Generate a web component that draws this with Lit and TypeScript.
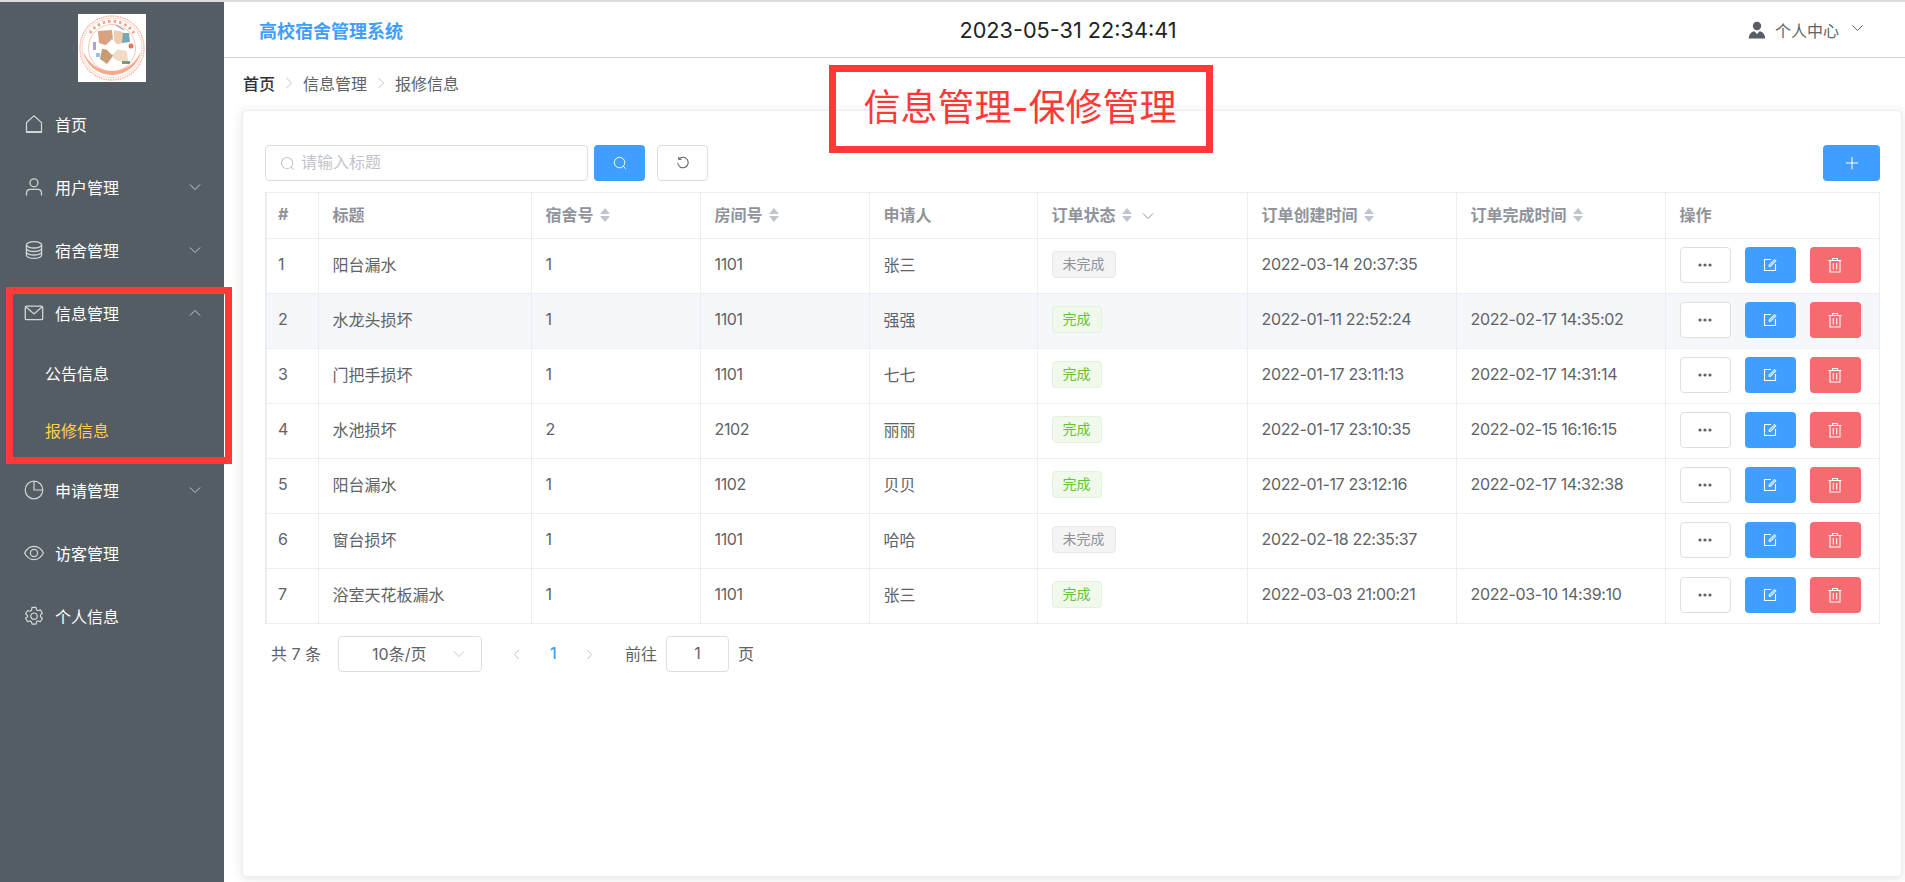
import { LitElement, html, css, svg } from "lit";
import { customElement } from "lit/decorators.js";

const chevDown = html`<svg class="chev" viewBox="0 0 12 8"><path d="M1 1.500l5 5 5-5" fill="none" stroke="currentColor" stroke-width="1"/></svg>`;
const chevUp = html`<svg class="chev" viewBox="0 0 12 8"><path d="M1 6.500l5-5 5 5" fill="none" stroke="currentColor" stroke-width="1"/></svg>`;

const icons = {
  home: svg`<path d="M2.500 8.500L10 1.800l7.500 6.700V18.500h-15z" fill="none" stroke="currentColor" stroke-width="1.200"/><path d="M2.500 17.800h15" stroke="currentColor" stroke-width="1.500"/>`,
  user: svg`<circle cx="10" cy="5.800" r="4" fill="none" stroke="currentColor" stroke-width="1.300"/><path d="M2.500 18.500v-2.500c0-2.200 1.700-3.700 3.900-3.700h7.200c2.200 0 3.900 1.500 3.900 3.700v2.500" fill="none" stroke="currentColor" stroke-width="1.300"/>`,
  db: svg`<ellipse cx="10" cy="4.800" rx="7.600" ry="3.200" fill="none" stroke="currentColor" stroke-width="1.300"/><path d="M2.400 4.800v10.400c0 1.800 3.400 3.200 7.600 3.200s7.600-1.400 7.600-3.200V4.800M2.400 8.300c0 1.800 3.400 3.200 7.600 3.200s7.600-1.400 7.600-3.200M2.400 11.800c0 1.800 3.400 3.200 7.600 3.200s7.600-1.400 7.600-3.200" fill="none" stroke="currentColor" stroke-width="1.300"/>`,
  mail: svg`<rect x="1.300" y="3.200" width="17.400" height="13.400" rx="1.200" fill="none" stroke="currentColor" stroke-width="1.300"/><path d="M1.800 3.800l8.200 7.200 8.200-7.200" fill="none" stroke="currentColor" stroke-width="1.300"/>`,
  pie: svg`<circle cx="10" cy="10" r="8.800" fill="none" stroke="currentColor" stroke-width="1.200"/><path d="M10 1.200V10h8.800" fill="none" stroke="currentColor" stroke-width="1.200"/>`,
  eye: svg`<path d="M.6 10C2.800 5.600 6.100 3.400 10 3.400s7.200 2.200 9.400 6.600c-2.200 4.400-5.500 6.600-9.400 6.600S2.800 14.400.6 10z" fill="none" stroke="currentColor" stroke-width="1.200"/><circle cx="10" cy="10" r="3.600" fill="none" stroke="currentColor" stroke-width="1.200"/>`,
  gear: svg`<path d="M8 1.400h4l.5 2.400 1.500.9 2.400-.8 2 3.400-1.900 1.600v1.800l1.900 1.600-2 3.400-2.400-.8-1.500.9-.5 2.400H8l-.5-2.400-1.500-.9-2.400.8-2-3.400 1.900-1.600V9.500L1.600 7.900l2-3.400 2.400.8 1.500-.9z" fill="none" stroke="currentColor" stroke-width="1.200" stroke-linejoin="round"/><circle cx="10" cy="10.200" r="3.200" fill="none" stroke="currentColor" stroke-width="1.200"/>`,
};

const menu = [
  { icon: "home", label: "首页" },
  { icon: "user", label: "用户管理", arrow: "down" },
  { icon: "db", label: "宿舍管理", arrow: "down" },
  { icon: "mail", label: "信息管理", arrow: "up", subs: [{ label: "公告信息" }, { label: "报修信息", active: true }] },
  { icon: "pie", label: "申请管理", arrow: "down" },
  { icon: "eye", label: "访客管理" },
  { icon: "gear", label: "个人信息" },
];

const rows = [
  ["1", "阳台漏水", "1", "1101", "张三", false, "2022-03-14 20:37:35", ""],
  ["2", "水龙头损坏", "1", "1101", "强强", true, "2022-01-11 22:52:24", "2022-02-17 14:35:02"],
  ["3", "门把手损坏", "1", "1101", "七七", true, "2022-01-17 23:11:13", "2022-02-17 14:31:14"],
  ["4", "水池损坏", "2", "2102", "丽丽", true, "2022-01-17 23:10:35", "2022-02-15 16:16:15"],
  ["5", "阳台漏水", "1", "1102", "贝贝", true, "2022-01-17 23:12:16", "2022-02-17 14:32:38"],
  ["6", "窗台损坏", "1", "1101", "哈哈", false, "2022-02-18 22:35:37", ""],
  ["7", "浴室天花板漏水", "1", "1101", "张三", true, "2022-03-03 21:00:21", "2022-03-10 14:39:10"],
];

const sort = html`<span class="sort"><i class="up"></i><i class="dn"></i></span>`;
const search = html`<svg class="ic" viewBox="0 0 16 16"><circle cx="7.500" cy="7.500" r="6" fill="none" stroke="currentColor" stroke-width="1.100"/><path d="M11.800 11.800l2.700 2.700" stroke="currentColor" stroke-width="1.100"/></svg>`;

@customElement("app-root")
export class AppRoot extends LitElement {
  static styles = css`
    :host { display: block; height: 882px; overflow: hidden; background: #fff; position: relative;
      font-family: Inter, "Noto Sans CJK SC", sans-serif; font-size: 16px; color: #606266; }
    .page { display: flex; height: 880px; border-top: 2px solid #dcdcdc; }
    .side { width: 224px; flex: none; background: #545c64; color: #fff; }
    .logo { height: 90px; display: flex; justify-content: center; padding-top: 12px; box-sizing: border-box; }
    .logo svg { width: 68px; height: 68px; display: block; }
    .item { height: 63px; display: flex; align-items: center; padding-left: 24px; }
    .item svg.mi { width: 20px; height: 20px; color: #d3d6d9; margin-right: 11px; flex: none; margin-top: 1px; }
    .item .chev { width: 12px; height: 8px; margin-left: auto; margin-right: 23px; color: #c8ccd0; }
    .sub { height: 57px; display: flex; align-items: center; padding-left: 45px; }
    .sub.on { color: #ffd04b; }
    .sub:last-child { margin-bottom: 3px; }
    .main { flex: 1; min-width: 0; display: flex; flex-direction: column; }
    .head { height: 55px; flex: none; border-bottom: 1.500px solid #d4d4d4; display: grid; grid-template-columns: 1fr auto 1fr; align-items: center; padding: 0 41px 0 35px; }
    .title { font-size: 18px; font-weight: 700; color: #409eff; }
    .clock { font-size: 21.700px; color: #222; margin-left: 13px; }
    .me { justify-self: end; display: flex; align-items: center; gap: 9px; color: #606266; }
    .me .chev { width: 13px; height: 8px; margin-left: 3px; margin-top: -4px; }
    .me .pic { width: 18px; height: 18px; }
    .crumb { height: 52px; flex: none; display: flex; align-items: center; padding-left: 19px; color: #606266; gap: 8px; box-sizing: border-box; padding-bottom: 3px; }
    .crumb b { font-weight: 500; color: #303133; }
    .crumb svg { width: 10px; height: 12px; color: #c0c4cc; margin: 0 1px; }
    .card { flex: 1; margin: 0 3px 5px 18px; border: 1px solid #ebeef5; border-radius: 4px; box-shadow: 0 2px 12px rgba(0,0,0,.1); padding: 34px 21px 0 22px; background: #fff; }
    .tools { display: flex; align-items: center; height: 36px; margin-bottom: 11px; }
    .input { width: 323px; height: 36px; box-sizing: border-box; border: 1px solid #dcdfe6; border-radius: 4px; display: flex; align-items: center; padding-left: 14px; color: #c0c4cc; gap: 6px; }
    .input span { padding-bottom: 4px; }
    .input .ic { width: 15px; height: 15px; }
    .btn { display: inline-flex; align-items: center; justify-content: center; height: 36px; box-sizing: border-box; border-radius: 4px; }
    .primary { background: #409eff; color: #fff; }
    .danger { background: #f56b70; color: #fff; }
    .plain { background: #fff; border: 1px solid #dcdfe6; color: #606266; }
    .tools .s { width: 51px; margin-left: 6px; }
    .tools .r { width: 51px; margin-left: 12px; }
    .tools .a { width: 57px; margin-left: auto; }
    .btn .ic { width: 14px; height: 14px; }
    table { border-collapse: collapse; table-layout: fixed; width: 1613px; border-left: 2px solid #ebeef5; }
    th, td { border: 1px solid #ebeef5; padding: 0 0 4px 14px; text-align: left; font-size: 16px; box-sizing: border-box; white-space: nowrap; }
    th:first-child, td:first-child { padding-left: 11px; }
    th { height: 46px; color: #909399; font-weight: 700; }
    td { height: 55px; }
    td.num { letter-spacing: -.35px; }
    tr.hov td { background: #f5f7fa; }
    .sort { display: inline-flex; flex-direction: column; gap: 2px; margin-left: 6px; vertical-align: middle; margin-top: -2px; }
    .sort i { display: block; width: 0; height: 0; border-left: 5px solid transparent; border-right: 5px solid transparent; }
    .sort .up { border-bottom: 6px solid #c0c4cc; }
    .sort .dn { border-top: 6px solid #c0c4cc; }
    th .chev { width: 12px; height: 8px; color: #909399; margin-left: 10px; vertical-align: middle; }
    .tag { display: inline-flex; align-items: center; height: 27px; box-sizing: border-box; padding: 0 10px 2px; font-size: 14px; border-radius: 4px; border: 1px solid #e9e9eb; background: #f4f4f5; color: #909399; vertical-align: middle; }
    .tag.ok { background: #f0f9eb; border-color: #e1f3d8; color: #67c23a; }
    .ops { display: flex; gap: 14px; margin-bottom: -2px; }
    .ops .btn { width: 51px; }
    .ops .ic { width: 16px; height: 16px; }
    .pager { display: flex; align-items: center; height: 36px; margin-top: 12px; padding-left: 6px; color: #606266; }
    .pager > span { padding-bottom: 3px; }
    .sel { width: 144px; height: 36px; box-sizing: border-box; margin-left: 17px; border: 1px solid #dcdfe6; border-radius: 4px; display: flex; align-items: center; padding-left: 33px; }
    .sel span { padding-bottom: 3px; }
    .sel .chev { width: 14px; height: 8px; margin-left: auto; margin-right: 15px; color: #c0c4cc; }
    .nav { width: 11px; height: 13px; color: #c0c4cc; }
    .nav.prev { margin-left: 29px; }
    .pager > .cur { color: #409eff; margin: 0 28px; font-weight: 500; width: 6px; text-align: center; }
    .pager > .go { margin-left: 30px; }
    .jump { width: 63px; height: 36px; box-sizing: border-box; border: 1px solid #dcdfe6; border-radius: 4px; margin: 0 9px; display: flex; align-items: center; justify-content: center; padding-bottom: 3px; }
    .note { position: absolute; box-sizing: border-box; border: 7px solid #ff3838; }
    .n1 { left: 6px; top: 287px; width: 226px; height: 177px; }
    .n2 { left: 829px; top: 65px; width: 384px; height: 88px; display: flex; align-items: center; justify-content: center; color: #ff3838; font-size: 37px; padding: 0 2px 8px 0; }
  `;

  private renderMenu() {
    return menu.map((m: any) => html`
      <div class="item">
        <svg class="mi" viewBox="0 0 20 20">${(icons as any)[m.icon]}</svg>
        <span>${m.label}</span>
        ${m.arrow === "down" ? chevDown : m.arrow === "up" ? chevUp : ""}
      </div>
      ${(m.subs || []).map((s: any) => html`<div class="sub ${s.active ? "on" : ""}">${s.label}</div>`)}
    `);
  }

  private renderLogo() {
    return html`<svg viewBox="0 0 68 68">
      <rect width="68" height="68" fill="#fff"/>
      <circle cx="34" cy="34" r="32" fill="none" stroke="#f9ab93" stroke-width="1.400" stroke-dasharray="1.400 1"/>
      <circle cx="34" cy="34" r="30" fill="#fff" stroke="#fbc4b3" stroke-width=".7"/>
      <path d="M12 19A26.500 26.500 0 0 1 56 19" fill="none" stroke="#f2a48b" stroke-width="3" stroke-dasharray="2.500 3"/>
      <circle cx="34" cy="34" r="23.500" fill="#fff" stroke="#f9b7a2" stroke-width=".8"/>
      <path d="M5 37a29.500 29.500 0 0 0 58 0c-5 12-15 20-29 20S10 49 5 37z" fill="#f9a88e"/>
      <path d="M36 19h15l1 9-16 2z" fill="#77a8b5"/>
      <path d="M20 17l14-1 1 10-5 6-9-3z" fill="#d9a27e"/>
      <path d="M36 16l9 2-1 11-8 3z" fill="#efcdb0"/>
      <path d="M24 35l10 1 1 6-6 8-7-5z" fill="#c79c73"/>
      <path d="M38 35l11 2 1 11-10-1-6-4z" fill="#f2dcc5"/>
      <path d="M44 47h8v3h-8z" fill="#7b9a86"/>
      <path d="M34 25l8 8-8 8-8-8z" fill="#fff"/>
      <circle cx="53" cy="32" r="2.500" fill="#e8705f"/>
      <rect x="15" y="28" width="3" height="8" fill="#a9a6d6"/>
      <rect x="18" y="39" width="4" height="4" fill="#9fc0dc"/>
      <path d="M38 11l8 5" stroke="#9aa6d8" stroke-width="1.200"/>
    </svg>`;
  }

  render() {
    const widths = [52, 213, 169, 169, 168, 210, 209, 209, 214];
    return html`
      <div class="page">
        <aside class="side">
          <div class="logo">${this.renderLogo()}</div>
          ${this.renderMenu()}
        </aside>
        <main class="main">
          <header class="head">
            <div class="title">高校宿舍管理系统</div>
            <div class="clock">2023-05-31 22:34:41</div>
            <div class="me">
              <svg class="pic" viewBox="0 0 18 18"><circle cx="9" cy="5" r="4.200" fill="#595d66"/><path d="M.8 17.500c0-4.200 2.800-7 5.500-7.300L9 13l2.700-2.800c2.700.3 5.500 3.100 5.500 7.300z" fill="#595d66"/></svg>
              <span>个人中心</span>${chevDown}
            </div>
          </header>
          <nav class="crumb">
            <b>首页</b>
            <svg viewBox="0 0 10 12"><path d="M2.500 1l5 5-5 5" fill="none" stroke="currentColor"/></svg>
            <span>信息管理</span>
            <svg viewBox="0 0 10 12"><path d="M2.500 1l5 5-5 5" fill="none" stroke="currentColor"/></svg>
            <span>报修信息</span>
          </nav>
          <section class="card">
            <div class="tools">
              <div class="input">${search}<span>请输入标题</span></div>
              <span class="btn primary s">${search}</span>
              <span class="btn plain r"><svg class="ic" viewBox="0 0 16 16"><path d="M3.600 3.400A6 6 0 1 1 2 8" fill="none" stroke="currentColor" stroke-width="1.200"/><path d="M3 .9l.4 3 3-.2" fill="none" stroke="currentColor" stroke-width="1.200"/></svg></span>
              <span class="btn primary a"><svg class="ic" viewBox="0 0 16 16"><path d="M8 1v14M1 8h14" stroke="currentColor" stroke-width="1.200"/></svg></span>
            </div>
            <table>
              <colgroup>${widths.map((w) => html`<col style="width:${w}px">`)}</colgroup>
              <thead><tr>
                <th>#</th><th>标题</th><th>宿舍号${sort}</th><th>房间号${sort}</th><th>申请人</th>
                <th>订单状态${sort}${chevDown}</th><th>订单创建时间${sort}</th><th>订单完成时间${sort}</th><th>操作</th>
              </tr></thead>
              <tbody>
                ${rows.map((r, i) => html`<tr class="${i === 1 ? "hov" : ""}">
                  <td>${r[0]}</td><td>${r[1]}</td><td>${r[2]}</td><td class="num">${r[3]}</td><td>${r[4]}</td>
                  <td><span class="tag ${r[5] ? "ok" : ""}">${r[5] ? "完成" : "未完成"}</span></td>
                  <td class="num">${r[6]}</td><td class="num">${r[7]}</td>
                  <td><div class="ops">
                    <span class="btn plain"><svg class="ic" viewBox="0 0 16 16"><circle cx="3" cy="8" r="1.600" fill="currentColor"/><circle cx="8" cy="8" r="1.600" fill="currentColor"/><circle cx="13" cy="8" r="1.600" fill="currentColor"/></svg></span>
                    <span class="btn primary"><svg class="ic" viewBox="0 0 16 16"><path d="M9 2.500H2.500v11h11V7" fill="none" stroke="currentColor" stroke-width="1.100"/><path d="M7 9.500V7.800L12.500 2.300l1.700 1.700L8.700 9.500z" fill="#a9d3ff" stroke="currentColor" stroke-width=".8"/></svg></span>
                    <span class="btn danger"><svg class="ic" viewBox="0 0 16 16"><path d="M1.500 3.500h13M5.500 3.500V1.500h5v2M3 3.500v11.500h10V3.500M6.300 6v6.500M9.700 6v6.500" fill="none" stroke="currentColor" stroke-width="1.100"/></svg></span>
                  </div></td>
                </tr>`)}
              </tbody>
            </table>
            <div class="pager">
              <span>共 7 条</span>
              <div class="sel"><span>10条/页</span>${chevDown}</div>
              <svg class="nav prev" viewBox="0 0 11 13"><path d="M7.500 2l-4 4.500 4 4.500" fill="none" stroke="currentColor"/></svg>
              <span class="cur">1</span>
              <svg class="nav" viewBox="0 0 11 13"><path d="M3.500 2l4 4.500-4 4.500" fill="none" stroke="currentColor"/></svg>
              <span class="go">前往</span>
              <div class="jump">1</div>
              <span>页</span>
            </div>
          </section>
        </main>
      </div>
      <div class="note n1"></div>
      <div class="note n2">信息管理-保修管理</div>
    `;
  }
}
